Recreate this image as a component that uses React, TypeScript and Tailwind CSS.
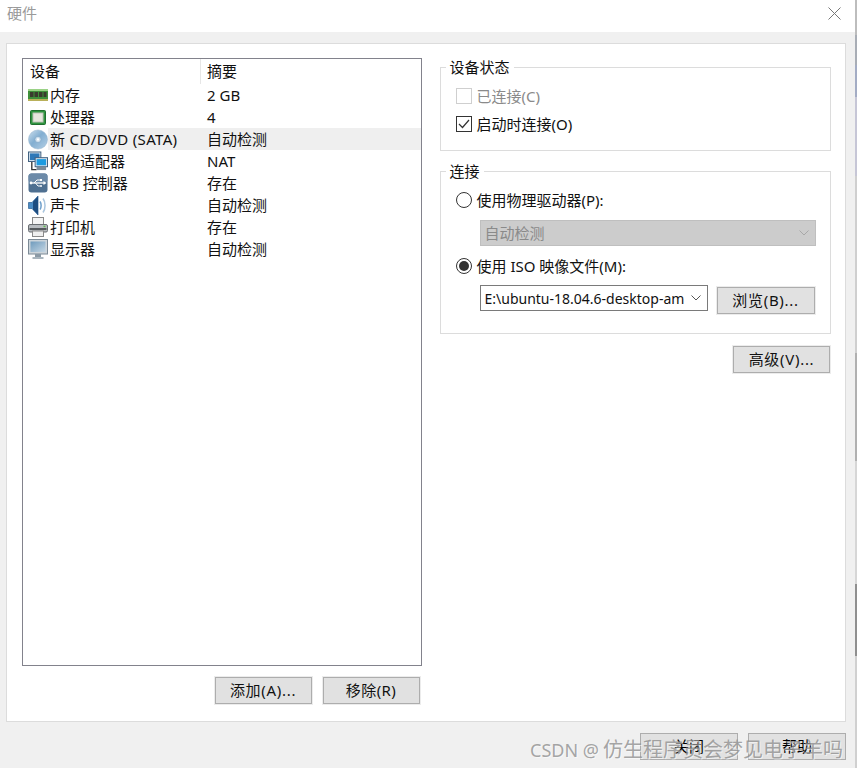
const CJK = "font-['Noto_Sans','Noto_Sans_CJK_SC',sans-serif]";

function Btn({ children, className = "" }: { children: React.ReactNode; className?: string }) {
  return (
    <div className={"border border-[#adadad] bg-[#e1e1e1] flex items-center justify-center text-[15px] text-[#111] " + className}>
      {children}
    </div>
  );
}

function RamIcon() {
  return (
    <svg width="20" height="12" viewBox="0 0 20 12">
      <rect x="0" y="0" width="20" height="12" fill="#3f8f3a" />
      <rect x="0" y="0" width="20" height="2" fill="#9ad286" />
      <rect x="2" y="3" width="3.500" height="5" fill="#3a3a2e" />
      <rect x="6.500" y="3" width="3.500" height="5" fill="#3a3a2e" />
      <rect x="11" y="3" width="3.500" height="5" fill="#3a3a2e" />
      <rect x="15.500" y="3" width="3" height="5" fill="#3a3a2e" />
      <rect x="0" y="10" width="20" height="2" fill="#b9b05a" />
    </svg>
  );
}
function CpuIcon() {
  return (
    <svg width="16" height="15" viewBox="0 0 16 15">
      <rect x="0.500" y="0.500" width="15" height="14" rx="1" fill="#2f9440" stroke="#1f6e2e" />
      <rect x="3" y="3" width="10" height="9" fill="#e6e6de" stroke="#c0c4b8" />
    </svg>
  );
}
function DiscIcon() {
  return (
    <svg width="21" height="21" viewBox="0 0 21 21">
      <defs>
        <linearGradient id="d1" x1="0" y1="0" x2="1" y2="1">
          <stop offset="0" stopColor="#cfe0ee" />
          <stop offset="0.45" stopColor="#82aed1" />
          <stop offset="1" stopColor="#b5d0e6" />
        </linearGradient>
      </defs>
      <circle cx="10.500" cy="10.500" r="10" fill="url(#d1)" stroke="#9ab9d2" strokeWidth="0.600" />
      <circle cx="10.500" cy="10.500" r="3.200" fill="#cfe0ee" stroke="#7fa5c4" strokeWidth="0.700" />
      <circle cx="10.500" cy="10.500" r="1.200" fill="#fff" />
    </svg>
  );
}
function NetIcon() {
  return (
    <svg width="21" height="21" viewBox="0 0 21 21">
      <rect x="0.500" y="0.500" width="13" height="10" fill="#dbe5ee" stroke="#3b5c7c" />
      <rect x="2" y="2" width="10" height="7" fill="#2f78b8" />
      <path d="M4 11v8h5" fill="none" stroke="#333" strokeWidth="1.400" />
      <rect x="7.500" y="6.500" width="13" height="9.500" fill="#dbe5ee" stroke="#3b5c7c" />
      <rect x="9" y="8" width="10" height="6.500" fill="#1d9be0" />
      <rect x="9" y="16" width="10" height="3.500" fill="#7d8c99" />
    </svg>
  );
}
function UsbIcon() {
  return (
    <svg width="20" height="20" viewBox="0 0 20 20">
      <rect x="0.500" y="0.500" width="19" height="19" rx="3" fill="#4f7091" />
      <rect x="0.500" y="0.500" width="19" height="9" rx="3" fill="#6c8aa8" />
      <path d="M2.500 10h14" stroke="#fff" strokeWidth="1.300" />
      <path d="M15.500 8l3 2-3 2z" fill="#fff" />
      <path d="M6 10l3-3h3M7.500 10l2.500 3h2" fill="none" stroke="#fff" strokeWidth="1" />
      <circle cx="3" cy="10" r="1.400" fill="#fff" />
      <rect x="12" y="6" width="2" height="2" fill="#fff" />
      <circle cx="13" cy="13" r="1" fill="#fff" />
    </svg>
  );
}
function SoundIcon() {
  return (
    <svg width="19" height="21" viewBox="0 0 19 21">
      <path d="M0.500 7.500h3.500l6-6.500v19l-6-6.500H0.500z" fill="#4a8bc4" stroke="#2d5f92" strokeWidth="0.700" />
      <path d="M5 6.500l5-5v18l-5-5z" fill="#1e4d80" />
      <path d="M12 6.500c1.500 2 1.500 6 0 8" fill="none" stroke="#6e9fcb" strokeWidth="1.500" />
      <path d="M15 3.500c2.700 3.500 2.700 10.500 0 14" fill="none" stroke="#a9c5de" strokeWidth="1.500" />
    </svg>
  );
}
function PrinterIcon() {
  return (
    <svg width="20" height="20" viewBox="0 0 20 20">
      <rect x="4.500" y="0.500" width="11" height="7.500" fill="#f4f4f4" stroke="#8a8a8a" />
      <rect x="0.500" y="7.500" width="19" height="7.500" rx="1.500" fill="#b8bcc0" stroke="#6a6e72" />
      <rect x="1.500" y="11" width="17" height="2" fill="#55595d" />
      <rect x="15.500" y="8.700" width="2" height="1.500" fill="#5fbe4f" />
      <rect x="4.500" y="14" width="11" height="5.500" fill="#efefef" stroke="#8a8a8a" />
    </svg>
  );
}
function MonitorIcon() {
  return (
    <svg width="20" height="20" viewBox="0 0 20 20">
      <defs>
        <linearGradient id="m1" x1="0" y1="0" x2="1" y2="1">
          <stop offset="0" stopColor="#6f9bbd" />
          <stop offset="1" stopColor="#c4d6e3" />
        </linearGradient>
      </defs>
      <rect x="0.500" y="0.500" width="19" height="14.500" fill="#cdd5db" stroke="#7c8a96" />
      <rect x="2.500" y="2.500" width="15" height="10.500" fill="url(#m1)" />
      <rect x="7" y="15" width="6" height="3" fill="#8b9aa6" />
      <rect x="4.500" y="18" width="11" height="2" fill="#a9b5be" />
    </svg>
  );
}

const rows: { icon: React.ReactNode; name: string; value: string; selected?: boolean }[] = [
  { icon: <RamIcon />, name: "内存", value: "2 GB" },
  { icon: <span className="pl-[2px] flex"><CpuIcon /></span>, name: "处理器", value: "4" },
  { icon: <DiscIcon />, name: "新 CD/DVD (SATA)", value: "自动检测", selected: true },
  { icon: <NetIcon />, name: "网络适配器", value: "NAT" },
  { icon: <UsbIcon />, name: "USB 控制器", value: "存在" },
  { icon: <SoundIcon />, name: "声卡", value: "自动检测" },
  { icon: <PrinterIcon />, name: "打印机", value: "存在" },
  { icon: <MonitorIcon />, name: "显示器", value: "自动检测" },
];

function Group({ title, className, children }: { title: string; className: string; children: React.ReactNode }) {
  return (
    <div className={"relative border border-[#dcdcdc] " + className}>
      <div className="absolute left-[5px] top-[-11px] bg-white px-[4px] text-[15px] leading-[20px] text-[#111]">{title}</div>
      {children}
    </div>
  );
}

function Chevron({ color }: { color: string }) {
  return (
    <svg width="10" height="6" viewBox="0 0 10 6">
      <path d="M0.500 0.500L5 5L9.500 0.500" fill="none" stroke={color} />
    </svg>
  );
}

export default function App() {
  return (
    <div className={"relative w-[857px] h-[768px] overflow-hidden bg-[#f0f0f0] " + CJK}>
      <div className="h-[32px] bg-white flex items-center justify-between pl-[7px] pr-[16px] pb-[6px]">
        <span className="text-[15px] text-[#9a9a9a]">硬件</span>
        <svg width="13" height="13" viewBox="0 0 13 13">
          <path d="M0.500 0.500L12.500 12.500M12.500 0.500L0.500 12.500" stroke="#777" strokeWidth="1" />
        </svg>
      </div>

      <div className="ml-[6px] mt-[11px] w-[840px] h-[679px] bg-white border border-[#dcdcdc] pl-[15px] pt-[14px] pr-[14px] flex gap-[18px]">
        <div className="w-[400px] flex flex-col">
          <div className="h-[608px] border border-[#82828c] text-[15px] text-[#111]">
            <div className="flex h-[25px] items-center">
              <div className="w-[178px] h-[25px] border-r border-[#e6e6e6] pl-[7px] leading-[25px]">设备</div>
              <div className="pl-[6px]">摘要</div>
            </div>
            {rows.map((r) => (
              <div key={r.name} className="flex h-[22px] items-center">
                <div className="w-[25px] h-[22px] flex items-center pl-[5px] shrink-0 overflow-visible">{r.icon}</div>
                <div className={"flex flex-1 h-[22px] items-center " + (r.selected ? "bg-[#efefef]" : "")}>
                  <div className={"w-[159px] pl-[2px] whitespace-nowrap " + (r.selected ? "tracking-[0.35px]" : "")}>{r.name}</div>
                  <div>{r.value}</div>
                </div>
              </div>
            ))}
          </div>
          <div className="flex justify-end gap-[11px] mt-[11px] pr-[2px]">
            <Btn className="w-[97px] h-[27px] outline outline-1 outline-[#ececec] tracking-[0.7px]">添加(A)...</Btn>
            <Btn className="w-[97px] h-[27px] outline outline-1 outline-[#ececec] tracking-[0.4px]">移除(R)</Btn>
          </div>
        </div>

        <div className="w-[392px] flex flex-col pt-[9px]">
          <Group title="设备状态" className="h-[84px] pl-[15px] pt-[19px]">
            <div className="flex items-center h-[18px] text-[15px] text-[#8a8a8a]">
              <div className="w-[16px] h-[16px] border border-[#cfcfcf]" />
              <span className="ml-[5px]">已连接(C)</span>
            </div>
            <div className="flex items-center h-[18px] mt-[10px] text-[15px] text-[#111]">
              <div className="w-[16px] h-[16px] border border-[#333] flex items-center justify-center">
                <svg width="12" height="10" viewBox="0 0 12 10">
                  <path d="M1 5L4.500 8.500L11 1" fill="none" stroke="#333" strokeWidth="1.200" />
                </svg>
              </div>
              <span className="ml-[5px]">启动时连接(O)</span>
            </div>
          </Group>

          <Group title="连接" className="h-[163px] mt-[20px] pl-[15px] pt-[19px]">
            <div className="flex items-center h-[18px] text-[15px] text-[#111]">
              <div className="w-[16px] h-[16px] rounded-full border border-[#333]" />
              <span className="ml-[5px]">使用物理驱动器(P):</span>
            </div>
            <div className="mt-[11px] ml-[24px] w-[336px] h-[26px] bg-[#cccccc] border border-[#bfbfbf] flex items-center justify-between pl-[4px] pr-[6px] text-[15px] text-[#8a8a8a]">
              <span>自动检测</span>
              <Chevron color="#a8a8a8" />
            </div>
            <div className="flex items-center h-[18px] mt-[11px] text-[15px] text-[#111]">
              <div className="w-[16px] h-[16px] rounded-full border border-[#333] flex items-center justify-center">
                <div className="w-[10px] h-[10px] rounded-full bg-[#333]" />
              </div>
              <span className="ml-[5px]">使用 ISO 映像文件(M):</span>
            </div>
            <div className="flex items-start mt-[10px] ml-[24px]">
              <div className="w-[228px] h-[26px] border border-[#7a7a7a] flex items-center justify-between pl-[4px] pr-[6px] text-[14px] text-[#111]">
                <span className="w-[199px] overflow-hidden whitespace-nowrap">E:\ubuntu-18.04.6-desktop-am</span>
                <Chevron color="#555" />
              </div>
              <Btn className="ml-[9px] mt-[2px] w-[98px] h-[27px] outline outline-1 outline-[#ececec] tracking-[0.7px]">浏览(B)...</Btn>
            </div>
          </Group>

          <div className="flex justify-end mt-[12px] pr-[1px]">
            <Btn className="w-[97px] h-[27px] outline outline-1 outline-[#ececec] tracking-[0.7px]">高级(V)...</Btn>
          </div>
        </div>
      </div>

      <div className="flex justify-end gap-[10px] mt-[11px] pr-[11px]">
        <Btn className="w-[98px] h-[27px] text-black">关闭</Btn>
        <Btn className="w-[98px] h-[27px] text-black">帮助</Btn>
      </div>

      <div className="absolute left-[530px] top-[736px] leading-[28px] text-[#8f8f8f]/80 whitespace-nowrap [text-shadow:1px_1px_0_rgba(255,255,255,0.5)]">
        <span className="text-[18px] mr-[4px]">CSDN @</span>
        <span className="text-[20px]">仿生程序员会梦见电子羊吗</span>
      </div>

      <div className="absolute right-0 top-0 w-[2px] h-[768px] flex flex-col">
        <div className="h-[35px] bg-[#bdbdbd]" />
        <div className="h-[30px] bg-[#a8adb5]" />
        <div className="h-[32px] bg-[#a3acc4]" />
        <div className="h-[79px] bg-[#c6c6d6]" />
        <div className="h-[177px] bg-[#cfcfcf]" />
        <div className="h-[108px] bg-[#b0b0b0]" />
        <div className="h-[123px] bg-[#d6d6d6]" />
        <div className="h-[72px] bg-[#8f8f8f]" />
        <div className="flex-1 bg-[#d0d0d0]" />
      </div>
    </div>
  );
}
